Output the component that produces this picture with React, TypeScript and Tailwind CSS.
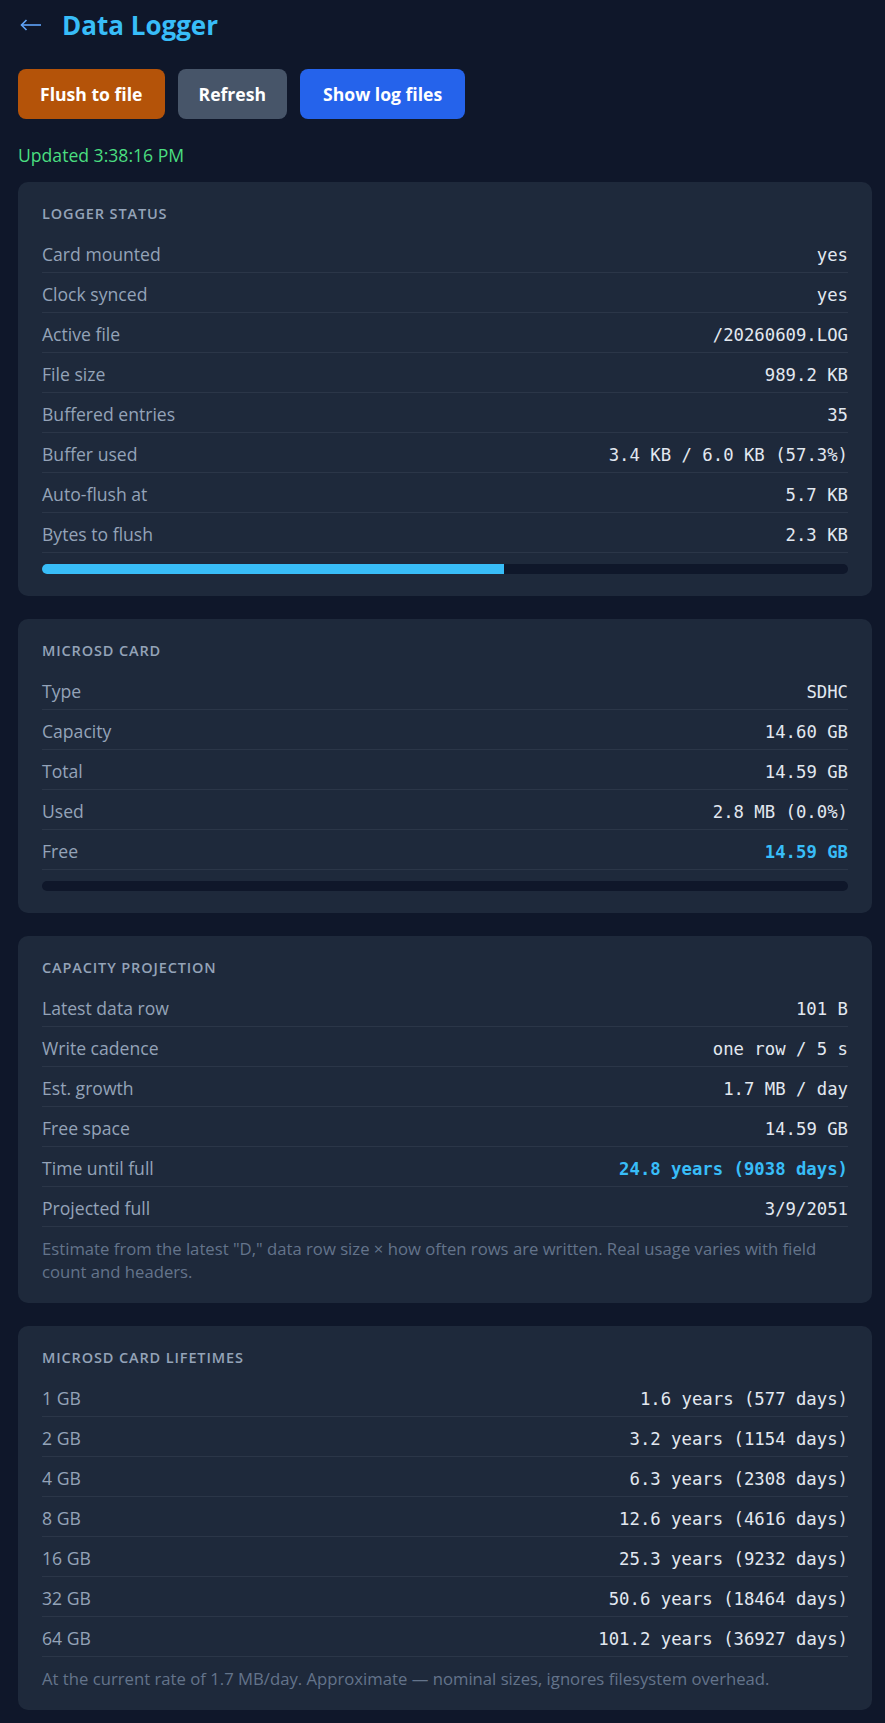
import type { ReactNode } from "react";

type Row = { label: string; value: string; accent?: boolean };

const loggerRows: Row[] = [
  { label: "Card mounted", value: "yes" },
  { label: "Clock synced", value: "yes" },
  { label: "Active file", value: "/20260609.LOG" },
  { label: "File size", value: "989.2 KB" },
  { label: "Buffered entries", value: "35" },
  { label: "Buffer used", value: "3.4 KB / 6.0 KB (57.3%)" },
  { label: "Auto-flush at", value: "5.7 KB" },
  { label: "Bytes to flush", value: "2.3 KB" },
];

const sdRows: Row[] = [
  { label: "Type", value: "SDHC" },
  { label: "Capacity", value: "14.60 GB" },
  { label: "Total", value: "14.59 GB" },
  { label: "Used", value: "2.8 MB (0.0%)" },
  { label: "Free", value: "14.59 GB", accent: true },
];

const projectionRows: Row[] = [
  { label: "Latest data row", value: "101 B" },
  { label: "Write cadence", value: "one row / 5 s" },
  { label: "Est. growth", value: "1.7 MB / day" },
  { label: "Free space", value: "14.59 GB" },
  { label: "Time until full", value: "24.8 years (9038 days)", accent: true },
  { label: "Projected full", value: "3/9/2051" },
];

const lifetimeRows: Row[] = [
  { label: "1 GB", value: "1.6 years (577 days)" },
  { label: "2 GB", value: "3.2 years (1154 days)" },
  { label: "4 GB", value: "6.3 years (2308 days)" },
  { label: "8 GB", value: "12.6 years (4616 days)" },
  { label: "16 GB", value: "25.3 years (9232 days)" },
  { label: "32 GB", value: "50.6 years (18464 days)" },
  { label: "64 GB", value: "101.2 years (36927 days)" },
];

function Card({ title, rows, children, tight }: { title: string; rows: Row[]; children?: ReactNode; tight?: boolean }) {
  return (
    <section className={`rounded-[10px] bg-[#1e293b] px-6 pt-[22px] ${tight ? "pb-[20px]" : "pb-[22px]"}`}>
      <h2 className="mb-[9px] text-[14.5px] font-semibold uppercase leading-[20px] tracking-[0.06em] text-[#94a3b8]">
        {title}
      </h2>
      {rows.map((r) => (
        <div
          key={r.label}
          className="flex h-[40px] items-baseline justify-between border-b border-[#2b3648] pt-[8px] leading-[26px]"
        >
          <span className="text-[17.6px] text-[#94a3b8]">{r.label}</span>
          <span
            className={`font-['DejaVu_Sans_Mono',monospace] text-[17.3px] leading-[20px] ${
              r.accent ? "font-bold text-[#38bdf8]" : "text-[#e2e8f0]"
            }`}
          >
            {r.value}
          </span>
        </div>
      ))}
      {children}
    </section>
  );
}

function Bar({ pct }: { pct: number }) {
  return (
    <div className="mt-[11px] h-[10px] w-full overflow-hidden rounded-full bg-[#0f172a]">
      <div className="h-full bg-[#38bdf8]" style={{ width: `${pct}%` }} />
    </div>
  );
}

export default function App() {
  return (
    <div className="min-h-screen bg-[#0f172a] pb-[10px] pl-[18px] pr-[13px] pt-[9px] font-['Open_Sans',sans-serif]">
      <header className="flex items-center">
        <svg width="22" height="12" viewBox="0 0 22 12" className="ml-[2px] text-[#60a5fa]" fill="none" stroke="currentColor" strokeWidth="1.6">
          <path d="M1.5 6H21" />
          <path d="M6.5 1L1.5 6l5 5" />
        </svg>
        <h1 className="ml-[20px] text-[26px] font-bold leading-[32px] text-[#38bdf8]">Data Logger</h1>
      </header>

      <div className="mt-[28px] flex gap-[13px]">
        <button className="rounded-lg bg-[#b45309] px-[22px] py-3 text-[17.6px] font-bold leading-[26px] text-white">
          Flush to file
        </button>
        <button className="rounded-lg bg-[#475569] px-[21px] py-3 text-[17.6px] font-bold leading-[26px] text-white">
          Refresh
        </button>
        <button className="rounded-lg bg-[#2563eb] px-[23px] py-3 text-[17.6px] font-bold leading-[26px] text-white">
          Show log files
        </button>
      </div>

      <p className="mt-[23px] text-[17.6px] leading-[26px] text-[#4ade80]">Updated 3:38:16 PM</p>

      <div className="mt-[14px] flex flex-col gap-[23px]">
        <Card title="Logger status" rows={loggerRows}>
          <Bar pct={57.3} />
        </Card>
        <Card title="microSD card" rows={sdRows}>
          <Bar pct={0} />
        </Card>
        <Card title="Capacity projection" rows={projectionRows} tight>
          <p className="mt-[10px] text-[16.7px] leading-[23px] text-[#64748b]">
            Estimate from the latest "D," data row size × how often rows are written. Real usage varies with field
            count and headers.
          </p>
        </Card>
        <Card title="microSD card lifetimes" rows={lifetimeRows} tight>
          <p className="mt-[10px] text-[16.7px] leading-[23px] text-[#64748b]">
            At the current rate of 1.7 MB/day. Approximate — nominal sizes, ignores filesystem overhead.
          </p>
        </Card>
      </div>
    </div>
  );
}
